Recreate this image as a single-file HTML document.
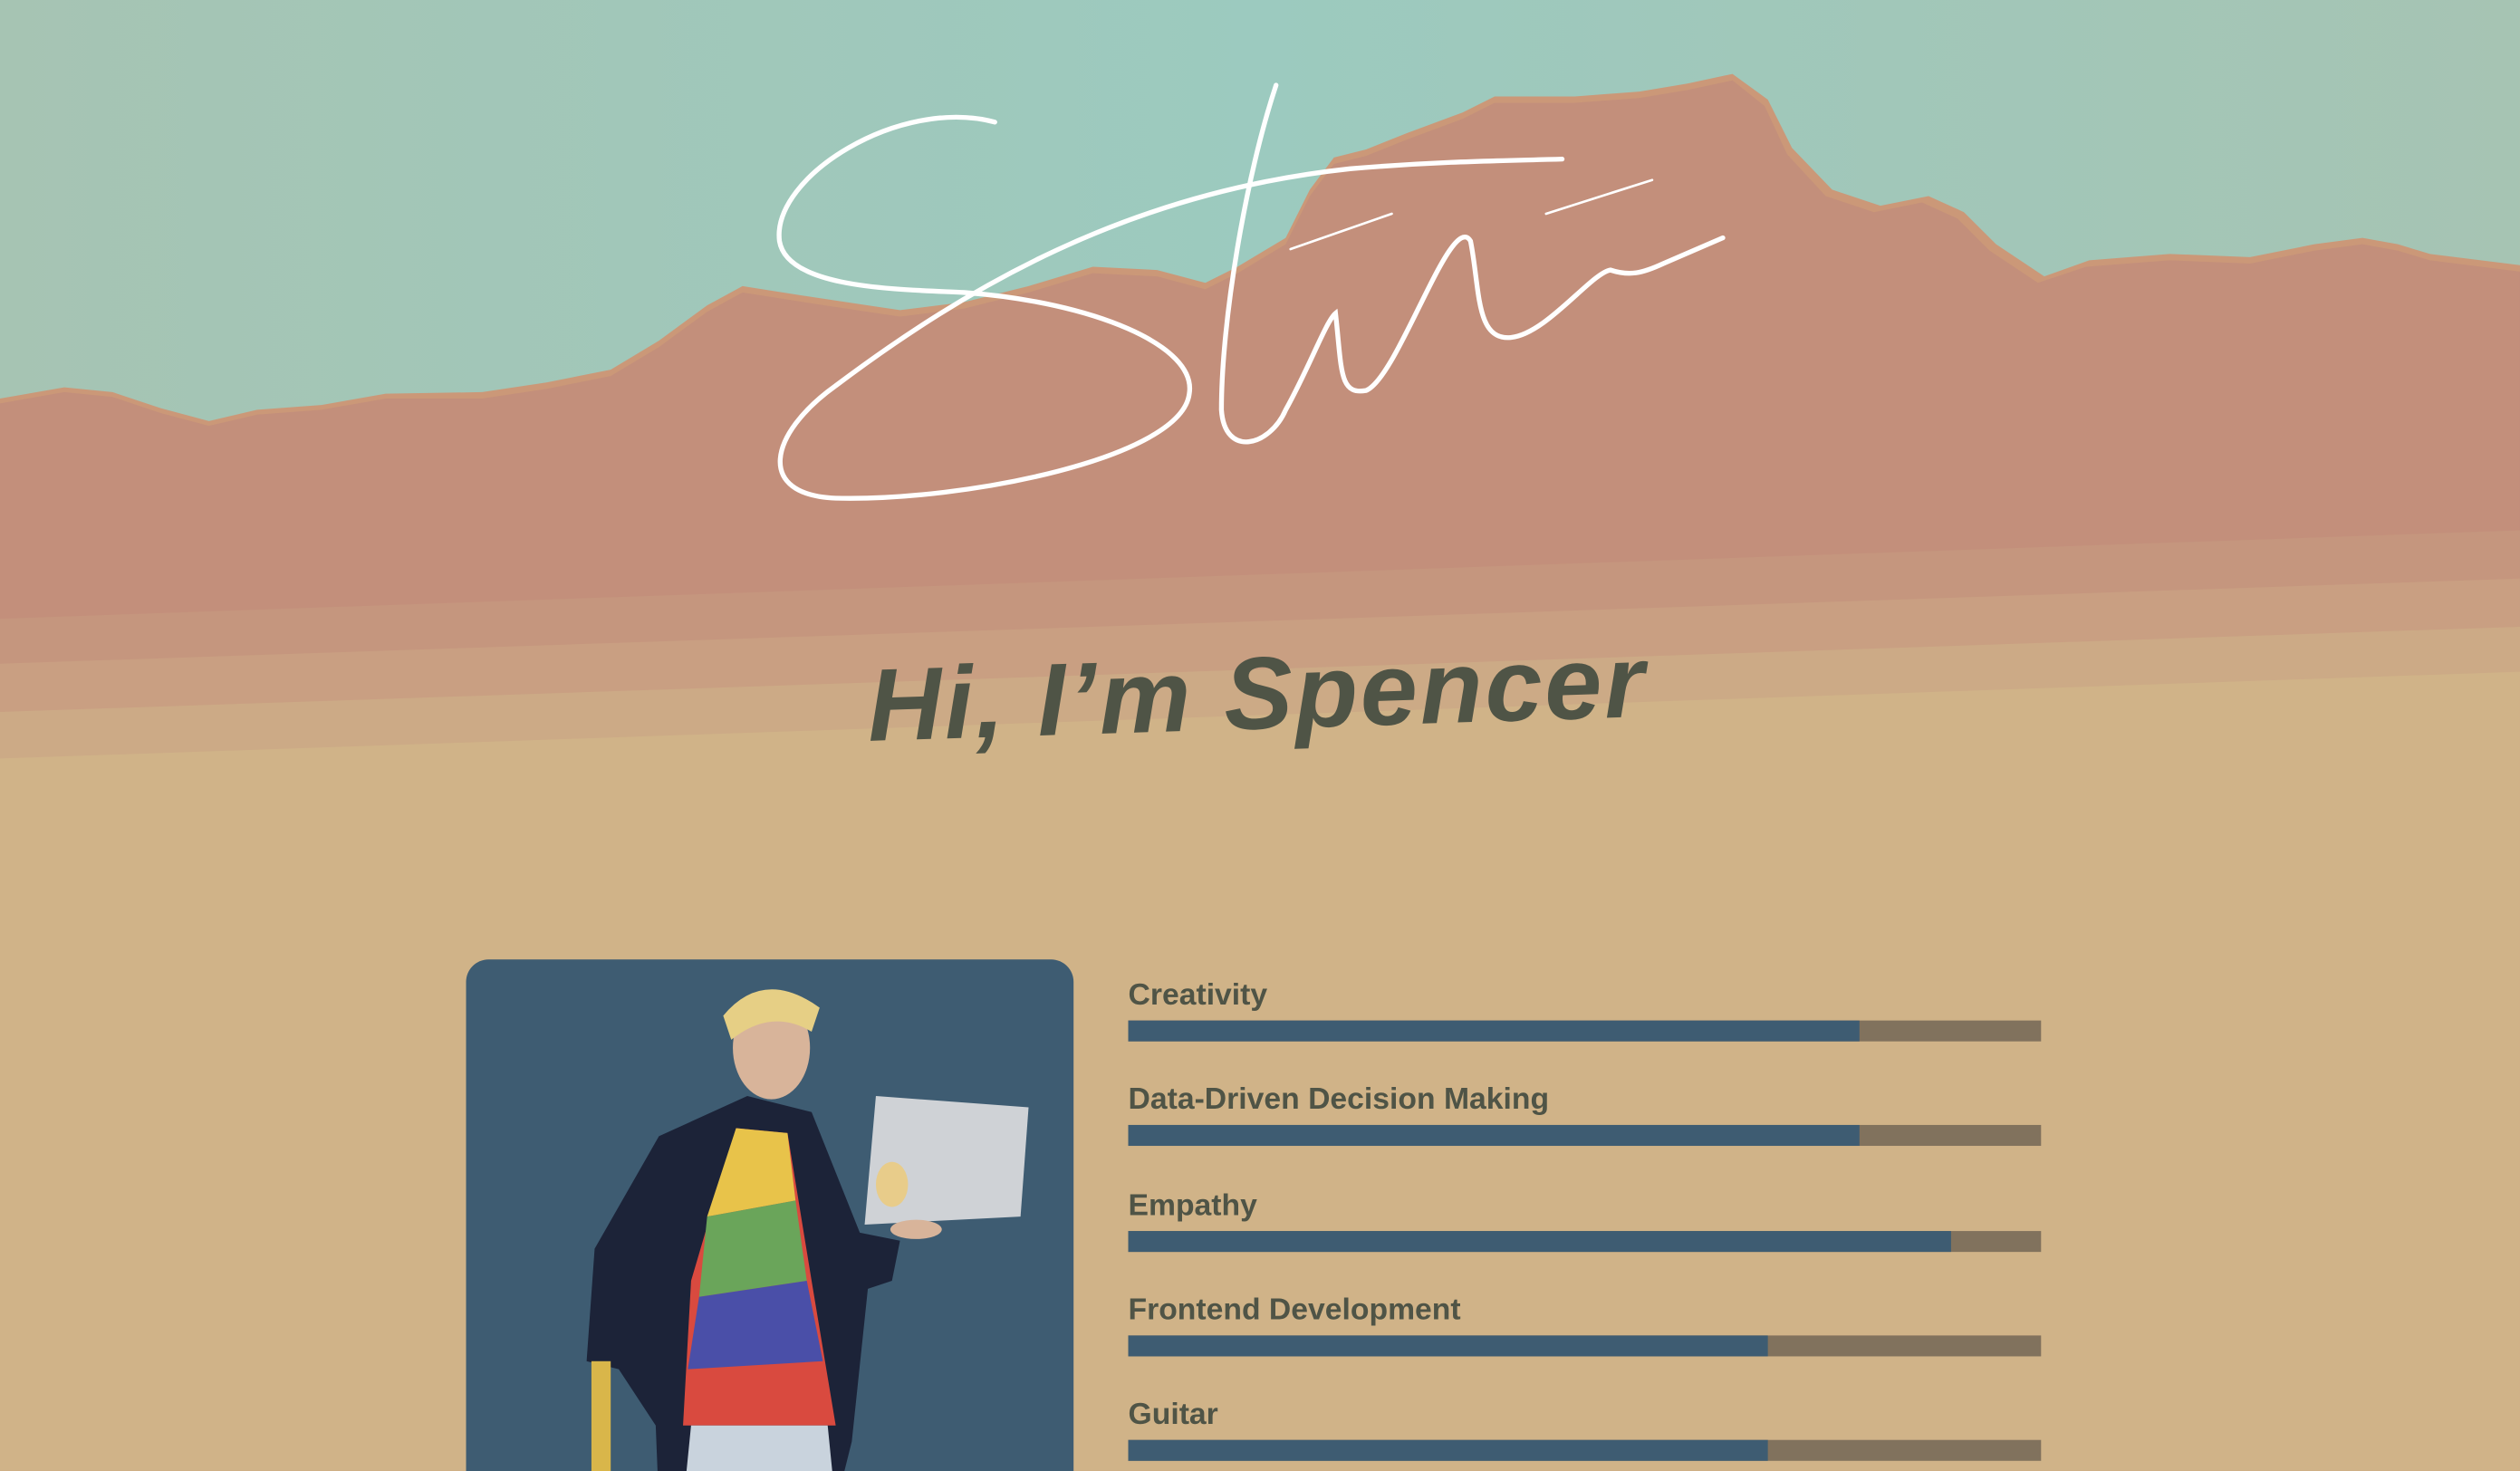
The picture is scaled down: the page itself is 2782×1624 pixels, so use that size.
<!DOCTYPE html>
<html><head><meta charset="utf-8"><style>
html,body{margin:0;padding:0;background:#d0b388;overflow:hidden}
#w{width:1568px;height:915px;position:relative;transform:scale(1.77423);transform-origin:0 0;font-family:"Liberation Sans",sans-serif}
h1{position:absolute;left:541px;top:402px;margin:0;font-size:64px;font-style:italic;font-weight:bold;color:#4f5446;transform:rotate(-1.8deg);transform-origin:left bottom;letter-spacing:1.5px;white-space:nowrap}
.card{position:absolute;left:290px;top:597px;width:378px;height:340px;background:#3e5c72;border-radius:14px;overflow:hidden}
.sk{position:absolute;left:702px;width:568px}
.sk span{display:block;font-size:19px;font-weight:bold;color:#4f5446;height:24px;line-height:24px}
.bar{height:13px;background:#81725d;margin-top:3px}
.bar i{display:block;height:13px;background:#3e5c72}
</style></head><body><div id="w">
<svg width="1568" height="915" viewBox="0 0 1568 915" style="position:absolute;left:0;top:0">
<defs><linearGradient id="sky" x1="0" x2="1"><stop offset="0" stop-color="#a6c4b3"/><stop offset=".5" stop-color="#9ccabf"/><stop offset="1" stop-color="#a6c4b3"/></linearGradient></defs>
<rect width="1568" height="500" fill="url(#sky)"/>
<path d="M0,248 L40,241 70,244 100,254 130,262 160,255 200,252 240,245 300,244 340,238 380,230 410,212 440,190 462,178 500,184 540,190 560,193 600,188 640,178 680,166 720,168 750,176 770,166 800,148 815,118 830,98 850,93 875,83 910,70 930,60 980,60 1020,57 1050,52 1078,46 1100,62 1115,92 1140,118 1170,128 1200,122 1222,132 1242,152 1272,172 1300,162 1350,158 1400,160 1440,152 1470,148 1492,152 1512,158 1568,165 L1568,500 L0,500Z" fill="#cb9878"/>
<path d="M0,251 L40,244 70,247 100,257 130,265 160,258 200,255 240,248 300,248 340,242 380,234 410,216 440,194 462,182 500,188 540,194 560,197 600,192 640,182 680,170 720,172 750,180 770,170 800,152 815,122 830,102 850,97 875,87 910,74 930,64 980,64 1020,61 1050,56 1078,50 1098,66 1112,96 1136,122 1166,132 1196,126 1218,136 1238,156 1268,176 1298,166 1350,162 1400,164 1440,156 1470,152 1492,156 1512,162 1568,169 L1568,500 L0,500Z" fill="#c38f7b"/>
<path d="M0,385 L1568,330 L1568,915 L0,915Z" fill="#c5967e"/>
<path d="M0,413 L1568,360 L1568,915 L0,915Z" fill="#c99f82"/>
<path d="M0,443 L1568,390 L1568,915 L0,915Z" fill="#ccaa86"/>
<path d="M0,472 L1568,418 L1568,915 L0,915Z" fill="#d0b388"/>
<g fill="none" stroke="#fff" stroke-width="3" stroke-linecap="round">
<path d="M619,76 C560,60 480,110 485,150 C490,180 560,180 600,182 C680,188 745,215 740,245 C735,285 600,312 520,310 C470,308 478,270 520,240 C600,180 700,120 840,105 C900,100 940,100 972,99"/>
<path d="M794,53 C775,110 760,200 760,255 C762,285 790,278 800,255 C815,228 825,200 831,195 C835,230 833,246 850,243 C870,235 903,130 915,150 C921,180 918,212 940,210 C962,208 990,170 1002,168 C1014,172 1022,170 1035,164 L1072,148"/>
<path d="M803,155 L866,133" stroke-width="1.5"/><path d="M962,133 L1028,112" stroke-width="1.5"/>
</g>
</svg>
<h1>Hi, I’m Spencer</h1>
<div class="card">
<svg width="378" height="340" viewBox="0 0 378 340">
<path d="M120,110 L175,85 L215,95 L245,170 L270,175 L265,200 L250,205 L240,300 L230,340 L120,340 L118,290 L95,255 L75,250 L80,180 Z" fill="#1c2338"/>
<path d="M168,105 L200,108 L215,200 L230,290 L135,290 L140,200 Z" fill="#d94a3f"/>
<path d="M168,105 L200,108 L205,150 L150,160 Z" fill="#e8c34a"/>
<path d="M150,160 L205,150 L212,200 L145,210 Z" fill="#6aa55a"/>
<path d="M145,210 L212,200 L222,250 L138,255 Z" fill="#4a4fa8"/>
<path d="M140,290 L225,290 L230,340 L135,340Z" fill="#c9d3dd"/>
<ellipse cx="190" cy="55" rx="24" ry="32" fill="#d8b49a"/>
<path d="M160,35 Q185,5 220,30 L215,45 Q190,30 165,50 Z" fill="#e6cf85"/>
<path d="M255,85 L350,92 L345,160 L248,165 Z" fill="#cfd2d6"/>
<ellipse cx="265" cy="140" rx="10" ry="14" fill="#e8cc8a"/>
<rect x="78" y="250" width="12" height="90" fill="#d9b64a"/>
<ellipse cx="280" cy="168" rx="16" ry="6" fill="#d8b49a"/>
</svg>
</div>
<div class="sk" style="top:608px"><span>Creativity</span><div class="bar"><i style="width:455px"></i></div></div>
<div class="sk" style="top:673px"><span>Data-Driven Decision Making</span><div class="bar"><i style="width:455px"></i></div></div>
<div class="sk" style="top:739px"><span>Empathy</span><div class="bar"><i style="width:512px"></i></div></div>
<div class="sk" style="top:804px"><span>Frontend Development</span><div class="bar"><i style="width:398px"></i></div></div>
<div class="sk" style="top:869px"><span>Guitar</span><div class="bar"><i style="width:398px"></i></div></div>
</div></body></html>
